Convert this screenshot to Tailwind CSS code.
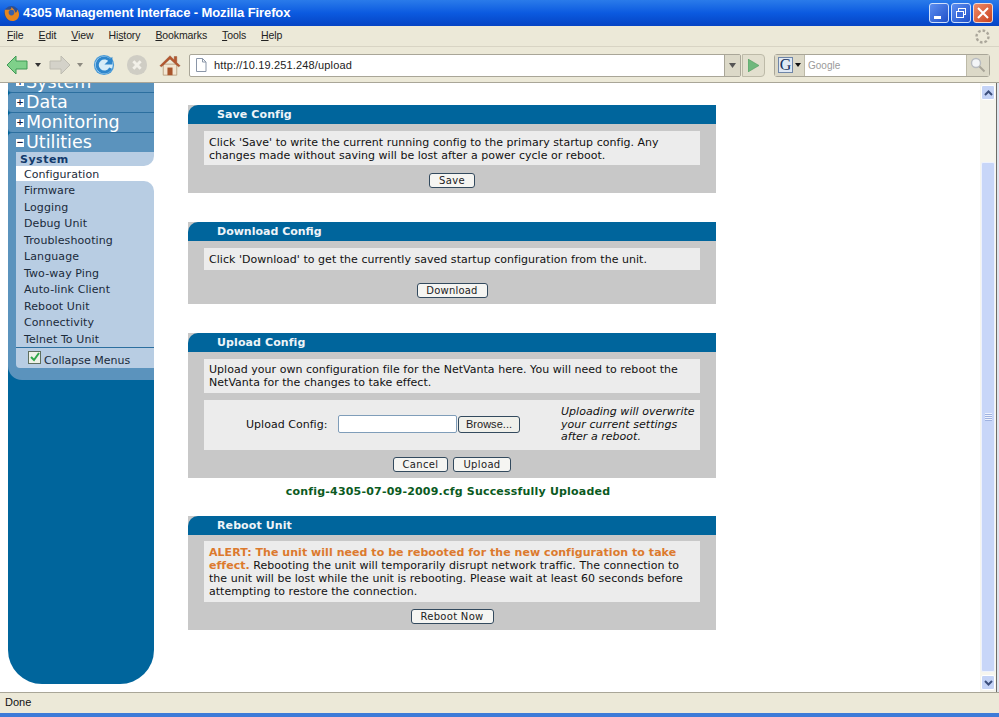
<!DOCTYPE html>
<html lang="en">
<head>
  <meta charset="UTF-8" />
  <title>4305 Management Interface - Mozilla Firefox</title>
  <script src="https://cdn.jsdelivr.net/npm/@tailwindcss/browser@4"></script>
</head>
<body class="h-[717px] w-[999px] overflow-hidden bg-[#0a4fd0] font-['DejaVu_Sans',sans-serif] text-[11px] text-black">

  <!-- title bar -->
  <div class="flex h-[26px] items-center bg-gradient-to-b from-[#2a7bea] via-[#0b5ae0] to-[#0644c4] pl-[3px] pr-[6px]">
    <svg class="h-[17px] w-[17px]" viewBox="0 0 18 18">
      <circle cx="9" cy="9" r="8" fill="#2b4f94"/>
      <path d="M2 5C1 10 4 17 10 17c4 0 7-3 7-7 0-2-1-4-2-5 0 2-1 3-2 3 0-2-2-4-4-6 0 2-1 3-3 3-1 0-2 0-4 0z" fill="#e8861e"/>
      <circle cx="9" cy="8" r="3" fill="#3a5fa8"/>
    </svg>
    <span class="ml-[3px] font-['Liberation_Sans',sans-serif] text-[13px] font-bold tracking-[-0.1px] text-white">4305 Management Interface - Mozilla Firefox</span>
    <div class="ml-auto flex gap-[2px]">
      <div class="flex h-[20px] w-[20px] items-end rounded-[3px] border border-[#cfe0fb] bg-gradient-to-br from-[#5d8ef0] to-[#1f4fc8] pb-[3px] pl-[4px]">
        <div class="h-[3px] w-[7px] bg-white"></div>
      </div>
      <div class="flex h-[20px] w-[20px] items-center justify-center rounded-[3px] border border-[#cfe0fb] bg-gradient-to-br from-[#5d8ef0] to-[#1f4fc8]">
        <svg class="h-[12px] w-[12px]" viewBox="0 0 12 12" fill="none" stroke="#fff"><rect x="3.5" y="1.5" width="7" height="6"/><rect x="1.5" y="4.5" width="7" height="6" fill="#3a6bdc"/></svg>
      </div>
      <div class="flex h-[20px] w-[20px] items-center justify-center rounded-[3px] border border-[#f0d8d0] bg-gradient-to-br from-[#ee8a66] to-[#c8401c]">
        <svg class="h-[12px] w-[12px]" viewBox="0 0 12 12" stroke="#fff" stroke-width="2"><path d="M1 1l10 10M11 1L1 11"/></svg>
      </div>
    </div>
  </div>

  <!-- menu bar -->
  <div class="flex h-[21px] items-center gap-[15px] border-b border-[#d8d4c4] bg-[#ece9d8] pl-[7px] pr-[8px] font-['Liberation_Sans',sans-serif] text-[10.500px] tracking-[-0.1px] text-[#222]">
    <span><u>F</u>ile</span>
    <span><u>E</u>dit</span>
    <span><u>V</u>iew</span>
    <span>Hi<u>s</u>tory</span>
    <span><u>B</u>ookmarks</span>
    <span><u>T</u>ools</span>
    <span><u>H</u>elp</span>
    <svg class="ml-auto h-[17px] w-[17px]" viewBox="0 0 17 17" fill="none" stroke="#aaa69a" stroke-width="2.4" stroke-dasharray="2.6 2"><circle cx="8.5" cy="8.5" r="6"/></svg>
  </div>

  <!-- toolbar -->
  <div class="flex h-[36px] items-center border-b border-[#a9a698] bg-[#ece9d8] pl-[6px] pr-[3px] pt-[1px]">
    <svg class="h-[20px] w-[22px]" viewBox="0 0 22 20"><path d="M1 10L10 1v5h11v8H10v5z" fill="#7fd08a" stroke="#3f9a55"/></svg>
    <svg class="ml-[7px] h-[4px] w-[6px]" viewBox="0 0 6 4"><path d="M0 0h6L3 4z" fill="#333"/></svg>
    <svg class="ml-[8px] h-[20px] w-[22px]" viewBox="0 0 22 20"><path d="M21 10L12 1v5H1v8h11v5z" fill="#d4d2c9" stroke="#bebcb1"/></svg>
    <svg class="ml-[6px] h-[4px] w-[6px]" viewBox="0 0 6 4"><path d="M0 0h6L3 4z" fill="#8c8a80"/></svg>
    <svg class="ml-[10px] h-[22px] w-[22px]" viewBox="0 0 25 25">
      <circle cx="12.5" cy="12.5" r="11.5" fill="#4a9bd8"/>
      <circle cx="12.5" cy="12.5" r="10" fill="#d6ecf8"/>
      <path d="M20 9a8 8 0 1 0 0 7" fill="none" stroke="#2e86cc" stroke-width="3.4"/>
      <path d="M22 3v9h-9z" fill="#2e86cc"/>
    </svg>
    <svg class="ml-[11px] h-[22px] w-[22px]" viewBox="0 0 24 24">
      <circle cx="12" cy="12" r="11" fill="#cfcdc4"/>
      <path d="M8 8l8 8M16 8l-8 8" stroke="#f2f0e8" stroke-width="3.2"/>
    </svg>
    <svg class="ml-[11px] h-[24px] w-[22px]" viewBox="0 0 26 26">
      <path d="M5 12h16v13H5z" fill="#f2e6d2" stroke="#b59a78"/>
      <path d="M1 14L13 2l5 5V3h3v7l4 4-2 1L13 6 3 15z" fill="#b5562e" stroke="#8a4526" stroke-width=".5"/>
      <path d="M10 16h6v9h-6z" fill="#a8552c"/>
    </svg>
    <!-- address box -->
    <div class="ml-[8px] flex h-[23px] w-[552px] items-center rounded-[2px] border border-[#a9a698] bg-white">
      <svg class="ml-[5px] h-[14px] w-[12px]" viewBox="0 0 12 14" fill="none" stroke="#8a96a8"><path d="M1.5.5h6l3.5 3.5v9.500h-9.500zM7.500.5v3.500h3.500"/></svg>
      <span class="ml-[7px] font-['Liberation_Sans',sans-serif] text-[11px] tracking-[0.15px] text-[#222]">http://10.19.251.248/upload</span>
      <div class="ml-auto flex h-full w-[16px] items-center justify-center border-l border-[#a9a698] bg-[#dcd9c8]">
        <svg class="h-[5px] w-[7px]" viewBox="0 0 7 5"><path d="M0 0h7L3.500 5z" fill="#555"/></svg>
      </div>
    </div>
    <div class="ml-[1px] flex h-[23px] w-[23px] items-center justify-center rounded-r-[4px] border border-[#bdbaa8] bg-[#e2dfce]">
      <svg class="h-[13px] w-[11px]" viewBox="0 0 11 13"><path d="M0 0l11 6.500L0 13z" fill="#6fb87c" stroke="#4f9a60" stroke-width=".6"/></svg>
    </div>
    <!-- search box -->
    <div class="ml-[9px] flex h-[23px] w-[216px] items-center rounded-[3px] border border-[#a9a698] bg-white">
      <div class="flex h-full w-[30px] items-center gap-[2px] border-r border-[#bdbaa8] bg-[#dcd9c8] pl-[3px]">
        <span class="flex h-[16px] w-[15px] items-center justify-center border border-[#6f86a8] bg-[#dfe8f4] font-['Liberation_Serif',serif] text-[16px] leading-none text-[#17305c]">G</span>
        <svg class="h-[4px] w-[6px]" viewBox="0 0 6 4"><path d="M0 0h6L3 4z" fill="#111"/></svg>
      </div>
      <span class="ml-[3px] font-['Liberation_Sans',sans-serif] text-[10px] text-[#9a9a9a]">Google</span>
      <div class="ml-auto flex h-full w-[23px] items-center justify-center border-l border-[#bdbaa8] bg-[#dcd9c8]">
        <svg class="h-[16px] w-[16px]" viewBox="0 0 16 16" fill="none"><circle cx="6" cy="6" r="4.500" fill="#f3f5f7" stroke="#b8bcc0" stroke-width="1.400"/><path d="M9.500 9.500l5 5" stroke="#a8a598" stroke-width="2"/></svg>
      </div>
    </div>
  </div>

  <!-- page -->
  <div class="flex h-[609px] overflow-hidden bg-white">
    <!-- sidebar -->
    <aside class="ml-[8px] mt-[-11px] h-[612px] w-[146px] shrink-0 rounded-b-[34px] bg-[#00659c]">
      <div class="flex h-[21px] items-center gap-[2px] rounded-l-[4px] border-b border-[#2c6f9f] bg-[#5b93bd] pl-[8px] text-[17.500px] text-white"><span class="flex h-[8px] w-[8px] items-center justify-center bg-white text-[9px] font-bold leading-none text-[#124]">+</span>System</div>
      <div class="flex h-[20px] items-center gap-[2px] rounded-l-[4px] border-b border-[#2c6f9f] bg-[#5b93bd] pl-[8px] text-[17.500px] text-white"><span class="flex h-[8px] w-[8px] items-center justify-center bg-white text-[9px] font-bold leading-none text-[#124]">+</span>Data</div>
      <div class="flex h-[20px] items-center gap-[2px] rounded-l-[4px] border-b border-[#2c6f9f] bg-[#5b93bd] pl-[8px] text-[17.500px] text-white"><span class="flex h-[8px] w-[8px] items-center justify-center bg-white text-[9px] font-bold leading-none text-[#124]">+</span>Monitoring</div>
      <div class="flex h-[19px] items-center gap-[2px] rounded-tl-[4px] bg-[#5b93bd] pl-[8px] text-[17.500px] text-white"><span class="flex h-[8px] w-[8px] items-center justify-center bg-white text-[9px] font-bold leading-none text-[#124]">−</span>Utilities</div>
      <!-- open menu -->
      <div class="overflow-hidden rounded-bl-[14px] bg-[#5b93bd] pb-[12px] pl-[8px]">
        <div class="bg-white">
          <div class="h-[14px] rounded-br-[10px] bg-[#b8cde3] pl-[4px] text-[11px] font-bold leading-[16px] tracking-[0.5px] text-[#123a6b]">System</div>
          <div class="ml-[3px] h-[15px] rounded-l-[8px] bg-white pl-[5px] text-[11px] leading-[17px] tracking-[0.05px] text-[#1a2a3a]">Configuration</div>
        </div>
        <div class="bg-white">
          <div class="h-[166px] rounded-tr-[10px] bg-[#b8cde3] pl-[8px] pt-[2px] text-[11px] leading-[16.500px] tracking-[0.1px] text-[#1a2a3a]">
            <div>Firmware</div>
            <div>Logging</div>
            <div>Debug Unit</div>
            <div>Troubleshooting</div>
            <div>Language</div>
            <div>Two-way Ping</div>
            <div>Auto-link Client</div>
            <div>Reboot Unit</div>
            <div>Connectivity</div>
            <div>Telnet To Unit</div>
          </div>
        </div>
        <div class="flex h-[21px] items-center rounded-bl-[4px] border-t border-[#2c6f9f] bg-[#b8cde3] pl-[12px] pt-[6px] text-[11px] text-[#1a2a3a]">
          <span class="mr-[3px] mt-[-8px] flex h-[13px] w-[13px] items-center justify-center border border-[#5f6f5f] bg-[#eef2e8]">
            <svg class="h-[10px] w-[10px]" viewBox="0 0 10 10" fill="none" stroke="#2fa84a" stroke-width="2"><path d="M1 5l3 3 5-7"/></svg>
          </span>
          Collapse Menus
        </div>
      </div>
    </aside>

    <!-- content -->
    <main class="ml-[34px] w-[528px] shrink-0 pt-[22px] text-[11px] leading-[13px] tracking-[0.03px] text-[#111]">
      <section class="h-[88px] bg-[#c8c8c8]">
        <h2 class="h-[19px] rounded-tl-[10px] bg-[#00659c] pl-[29px] text-[11px] font-bold leading-[20px] tracking-[0.1px] text-[#eef4f8]">Save Config</h2>
        <div class="mx-[16px] mt-[7px] h-[34px] bg-[#ececec] px-[5px] pt-[5px]">Click 'Save' to write the current running config to the primary startup config. Any changes made without saving will be lost after a power cycle or reboot.</div>
        <div class="mt-[8px] flex justify-center gap-[5px]">
          <button class="h-[15px] w-[46px] rounded-[3px] border border-[#334a5e] bg-[#f5f5f2] text-[10px] leading-none tracking-[0.35px] text-[#222]">Save</button>
        </div>
      </section>

      <section class="mt-[29px] h-[82px] bg-[#c8c8c8]">
        <h2 class="h-[19px] rounded-tl-[10px] bg-[#00659c] pl-[29px] text-[11px] font-bold leading-[20px] tracking-[0px] text-[#eef4f8]">Download Config</h2>
        <div class="mx-[16px] mt-[7px] h-[22px] bg-[#ececec] px-[5px] pt-[5px]">Click 'Download' to get the currently saved startup configuration from the unit.</div>
        <div class="mt-[13px] flex justify-center gap-[5px]">
          <button class="h-[15px] w-[71px] rounded-[3px] border border-[#334a5e] bg-[#f5f5f2] text-[10px] leading-none tracking-[0.2px] text-[#222]">Download</button>
        </div>
      </section>

      <section class="mt-[29px] h-[145px] bg-[#c8c8c8]">
        <h2 class="h-[19px] rounded-tl-[10px] bg-[#00659c] pl-[29px] text-[11px] font-bold leading-[20px] tracking-[0.1px] text-[#eef4f8]">Upload Config</h2>
        <div class="mx-[16px] mt-[7px] h-[34px] bg-[#ececec] px-[5px] pt-[4px]">Upload your own configuration file for the NetVanta here. You will need to reboot the NetVanta for the changes to take effect.</div>
        <div class="mx-[16px] mt-[7px] flex h-[50px] items-center bg-[#ececec] pb-[2px]">
          <span class="ml-[42px] w-[92px] shrink-0 whitespace-nowrap">Upload Config:</span>
          <div class="h-[18px] w-[119px] shrink-0 rounded-[2px] border border-[#7f9db9] bg-white"></div>
          <button class="ml-[1px] h-[17px] w-[62px] shrink-0 rounded-[3px] border border-[#334a5e] bg-[#f0f0ea] font-['Liberation_Sans',sans-serif] text-[11px] leading-none text-[#222]">Browse...</button>
          <p class="ml-[41px] mt-[2px] w-[135px] shrink-0 text-[11px] italic leading-[12.500px]">Uploading will overwrite your current settings after a reboot.</p>
        </div>
        <div class="mt-[7px] flex justify-center gap-[5px]">
          <button class="h-[15px] w-[55px] rounded-[3px] border border-[#334a5e] bg-[#f5f5f2] text-[10px] leading-none tracking-[0.35px] text-[#222]">Cancel</button>
          <button class="h-[15px] w-[58px] rounded-[3px] border border-[#334a5e] bg-[#f5f5f2] text-[10px] leading-none tracking-[0.35px] text-[#222]">Upload</button>
        </div>
      </section>

      <p class="mt-[7px] h-[13px] pr-[8px] text-center text-[11px] font-bold tracking-[0.2px] text-[#0b5a1e]">config-4305-07-09-2009.cfg Successfully Uploaded</p>

      <section class="mt-[18px] h-[114px] bg-[#c8c8c8]">
        <h2 class="h-[19px] rounded-tl-[10px] bg-[#00659c] pl-[29px] text-[11px] font-bold leading-[20px] tracking-[0.1px] text-[#eef4f8]">Reboot Unit</h2>
        <div class="mx-[16px] mt-[6px] h-[61px] bg-[#ececec] px-[5px] pt-[5px]"><b class="tracking-[0.05px] text-[#dc7a2e]">ALERT: The unit will need to be rebooted for the new configuration to take effect.</b> Rebooting the unit will temporarily disrupt network traffic. The connection to the unit will be lost while the unit is rebooting. Please wait at least 60 seconds before attempting to restore the connection.</div>
        <div class="mt-[7px] flex justify-center gap-[5px]">
          <button class="h-[15px] w-[83px] rounded-[3px] border border-[#334a5e] bg-[#f5f5f2] text-[10px] leading-none tracking-[0.3px] text-[#222]">Reboot Now</button>
        </div>
      </section>
    </main>

    <!-- scrollbar -->
    <div class="ml-auto flex w-[16px] flex-col items-center bg-[#f6f5ee] pt-[2px]">
      <div class="flex h-[15px] w-[14px] shrink-0 items-center justify-center rounded-[2px] border border-white bg-[#c4d3f6]">
        <svg class="h-[6px] w-[9px]" viewBox="0 0 9 6" fill="none" stroke="#3c4f7c" stroke-width="2"><path d="M1 5l3.500-3.500L8 5"/></svg>
      </div>
      <div class="mt-[62px] flex h-[510px] w-[14px] shrink-0 items-center justify-center rounded-[2px] border border-[#eef2fd] bg-[#c8d6f8]">
        <div class="h-[8px] w-[7px] bg-[repeating-linear-gradient(#eef2fd_0,#eef2fd_1px,#9fb2e0_1px,#9fb2e0_2px)]"></div>
      </div>
      <div class="mt-[3px] flex h-[15px] w-[14px] shrink-0 items-center justify-center rounded-[2px] border border-white bg-[#c4d3f6]">
        <svg class="h-[6px] w-[9px]" viewBox="0 0 9 6" fill="none" stroke="#3c4f7c" stroke-width="2"><path d="M1 1l3.500 3.500L8 1"/></svg>
      </div>
    </div>
    <div class="w-[3px] shrink-0 border-l border-[#6c6c66] bg-[#dfe4ee]"></div>
  </div>

  <!-- status bar -->
  <div class="flex h-[21px] items-center border-t border-[#a9a698] bg-[#ece9d8] pb-[2px] pl-[5px] font-['Liberation_Sans',sans-serif] text-[11px] text-[#111]">Done</div>
  <div class="h-[4px] bg-[#3d7bd8]"></div>
</body>
</html>
